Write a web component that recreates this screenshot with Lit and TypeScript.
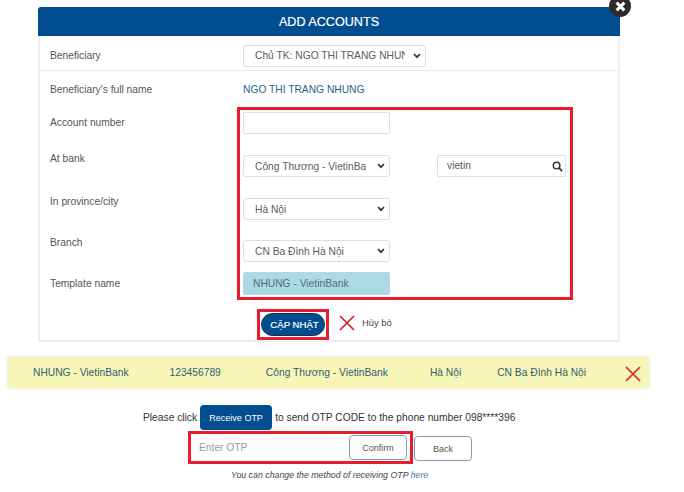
import { LitElement, html, css, svg } from "lit";
import { customElement } from "lit/decorators.js";

const cross = (cls: string) => html`<svg class=${cls} viewBox="0 0 16 16" aria-hidden="true">
  ${svg`<path d="M1 1 L15 15 M15 1 L1 15" fill="none" stroke="currentColor" stroke-width="1.7"/>`}
</svg>`;

@customElement("app-root")
export class AppRoot extends LitElement {
  static styles = css`
    :host {
      display: block;
      width: 684px;
      height: 492px;
      overflow: hidden;
      background: #fff;
      font-family: "Liberation Sans", Arial, sans-serif;
      font-size: 10.25px;
      color: #555;
    }
    * { box-sizing: border-box; }
    .card {
      position: relative;
      margin: 7px 0 0 38px;
      width: 582px;
      height: 335px;
      border: 2px solid #f0f0f0;
      border-top: 0;
      border-radius: 3px 3px 2px 2px;
    }
    .head {
      height: 29px;
      margin: 0 -2px;
      background: #004e8f;
      border-radius: 3px 3px 0 0;
      color: #fff;
      font-size: 12.6px;
      -webkit-text-stroke: 0.2px #fff;
      text-align: center;
      line-height: 30px;
    }
    .close {
      position: absolute;
      top: -12px;
      right: -13px;
      width: 22px;
      height: 22px;
      border-radius: 50%;
      background: #2e2a2a;
      display: flex;
      align-items: center;
      justify-content: center;
    }
    .close svg { width: 11px; height: 11px; color: #fff; }
    .first {
      display: grid;
      grid-template-columns: 193px 1fr;
      align-items: center;
      height: 35px;
      padding: 5px 0 0 10px;
      border-bottom: 1px solid #eaeaea;
    }
    .row {
      display: grid;
      grid-template-columns: 193px 147px 47px 129px;
      align-items: start;
      padding-left: 10px;
    }
    .label, .value { line-height: 16px; }
    .value { color: #27608f; }
    .h-name { height: 30px; margin-top: 11px; }
    .h-account { height: 39px; }
    .h-bank { height: 43px; }
    .h-city { height: 41px; }
    .h-branch { height: 37px; }
    .h-template { height: 38px; }
    .label-up { padding-top: 3px; }
    .label-down { padding-top: 4px; }
    .ctrl-down { padding-top: 4px; }
    .ctrl-down5 { padding-top: 5px; }
    select, .input {
      display: block;
      height: 22px;
      width: 147px;
      border: 1px solid #dedede;
      border-radius: 3px;
      background-color: #fff;
      font: inherit;
      color: #5c5c5c;
      outline: 0;
    }
    select {
      appearance: none;
      -webkit-appearance: none;
      padding: 0 23px 0 11px;
      background-image: url("data:image/svg+xml;utf8,<svg xmlns='http://www.w3.org/2000/svg' width='8' height='6' viewBox='0 0 8 6'><path d='M1 1 L4 4.2 L7 1' fill='none' stroke='%23333' stroke-width='1.7'/></svg>");
      background-repeat: no-repeat;
      background-position: right 4px center;
    }
    .first select { width: 183px; padding-right: 20px; }
    .input { border-radius: 1px; padding: 0 0 0 8px; }
    .template {
      height: 23px;
      background: #add8e6;
      border-color: #add8e6;
      border-radius: 2px;
      line-height: 21px;
      color: #4e6b7a;
      padding-left: 9px;
    }
    .search {
      width: 129px;
      display: flex;
      align-items: center;
      justify-content: space-between;
      padding: 0 2px 0 9px;
      line-height: 20px;
      border-radius: 2px;
    }
    .search svg { width: 11px; height: 11px; color: #333; }
    .red { border: 3px solid #e81c2c; }
    .annot {
      position: absolute;
      left: 197px;
      top: 100px;
      width: 336px;
      height: 193px;
      pointer-events: none;
    }
    .actions {
      display: flex;
      align-items: center;
      padding-left: 217px;
      height: 31px;
      margin-top: -1px;
    }
    .save-wrap {
      width: 72px;
      height: 31px;
      display: flex;
      align-items: center;
      justify-content: center;
    }
    .save {
      width: 64px;
      height: 23px;
      border-radius: 12px;
      border: 1px solid #1d2f45;
      background: #004e8f;
      color: #fff;
      font: inherit;
      font-size: 9.6px;
      -webkit-text-stroke: 0.2px #fff;
      padding: 0 0 0 3px;
    }
    .del { color: #d8222f; width: 16px; height: 16px; margin: 0 0 4px 10px; }
    .cancel { margin: 0 0 4px 7px; font-size: 9.4px; color: #444; }
    .band {
      margin: 15px 0 0 8px;
      width: 641px;
      height: 31px;
      background: #f7f6b6;
      box-shadow: 0 0 3px #d8d8d8;
      display: flex;
      align-items: center;
      color: #2d5f73;
      white-space: nowrap;
    }
    .band span:nth-child(1) { margin-left: 25px; }
    .band span:nth-child(2) { margin-left: 41px; }
    .band span:nth-child(3) { margin-left: 45px; }
    .band span:nth-child(4) { margin-left: 42px; }
    .band span:nth-child(5) { margin-left: 36px; }
    .band svg { color: #d8222f; width: 16px; height: 16px; margin: 2px 0 0 39px; }
    .otp-line {
      margin-top: 17px;
      height: 25px;
      display: flex;
      align-items: center;
      padding-left: 143px;
      color: #333;
      white-space: nowrap;
    }
    .receive {
      width: 72px;
      height: 25px;
      margin: 0 3px;
      background: #004e8f;
      color: #fff;
      border: 0;
      border-radius: 4px;
      font: inherit;
      font-size: 9px;
      padding: 0;
    }
    .otp-row {
      display: flex;
      align-items: flex-start;
      margin: 1px 0 0 188px;
    }
    .otp-box {
      width: 225px;
      height: 33px;
      display: flex;
      align-items: center;
      padding-left: 1px;
    }
    .otp-input {
      width: 151px;
      height: 25px;
      border: 0;
      color: #999;
      line-height: 25px;
      padding-left: 7px;
    }
    .btn {
      width: 58px;
      height: 25px;
      border: 1px solid #7f9fb9;
      border-radius: 4px;
      background: #fff;
      color: #555;
      font: inherit;
      font-size: 9px;
      padding: 0;
    }
    .confirm { margin-left: 6px; }
    .back { margin: 5px 0 0 1px; }
    .note {
      margin: 6px 0 0 231px;
      font-style: italic;
      font-size: 8.8px;
      color: #444;
      white-space: nowrap;
    }
    .note a { color: #3a7ab0; text-decoration: none; }
  `;

  render() {
    return html`
      <div class="card">
        <div class="head">ADD ACCOUNTS</div>
        <div class="close">
          <svg viewBox="0 0 10 10" aria-hidden="true"><path d="M1.5 1.5 L8.5 8.5 M8.5 1.5 L1.5 8.5" fill="none" stroke="currentColor" stroke-width="2.8"/></svg>
        </div>
        <div class="first">
          <span class="label">Beneficiary</span>
          <select><option>Chủ TK: NGO THI TRANG NHUNG</option></select>
        </div>
        <div class="row h-name">
          <span class="label">Beneficiary's full name</span>
          <span class="value">NGO THI TRANG NHUNG</span>
        </div>
        <div class="row h-account">
          <span class="label label-up">Account number</span>
          <div class="input"></div>
        </div>
        <div class="row h-bank">
          <span class="label">At bank</span>
          <div class="ctrl-down"><select><option>Công Thương - VietinBank</option></select></div>
          <span></span>
          <div class="ctrl-down">
            <div class="input search">vietin
              <svg viewBox="0 0 12 12" aria-hidden="true"><circle cx="5" cy="5" r="3.6" fill="none" stroke="currentColor" stroke-width="1.6"/><path d="M7.6 7.6 L11 11" stroke="currentColor" stroke-width="2"/></svg>
            </div>
          </div>
        </div>
        <div class="row h-city">
          <span class="label">In province/city</span>
          <div class="ctrl-down"><select><option>Hà Nội</option></select></div>
        </div>
        <div class="row h-branch">
          <span class="label">Branch</span>
          <div class="ctrl-down5"><select><option>CN Ba Đình Hà Nội</option></select></div>
        </div>
        <div class="row h-template">
          <span class="label label-down">Template name</span>
          <div class="input template">NHUNG - VietinBank</div>
        </div>
        <div class="annot red"></div>
        <div class="actions">
          <div class="save-wrap red"><button class="save">CẬP NHẬT</button></div>
          ${cross("del")}
          <span class="cancel">Hủy bỏ</span>
        </div>
      </div>

      <div class="band">
        <span>NHUNG - VietinBank</span>
        <span>123456789</span>
        <span>Công Thương - VietinBank</span>
        <span>Hà Nội</span>
        <span>CN Ba Đình Hà Nội</span>
        ${cross("")}
      </div>

      <div class="otp-line">
        Please click
        <button class="receive">Receive OTP</button>
        to send OTP CODE to the phone number 098****396
      </div>
      <div class="otp-row">
        <div class="otp-box red">
          <div class="otp-input">Enter OTP</div>
          <button class="btn confirm">Confirm</button>
        </div>
        <button class="btn back">Back</button>
      </div>
      <div class="note">You can change the method of receiving OTP <a href="#">here</a></div>
    `;
  }
}
